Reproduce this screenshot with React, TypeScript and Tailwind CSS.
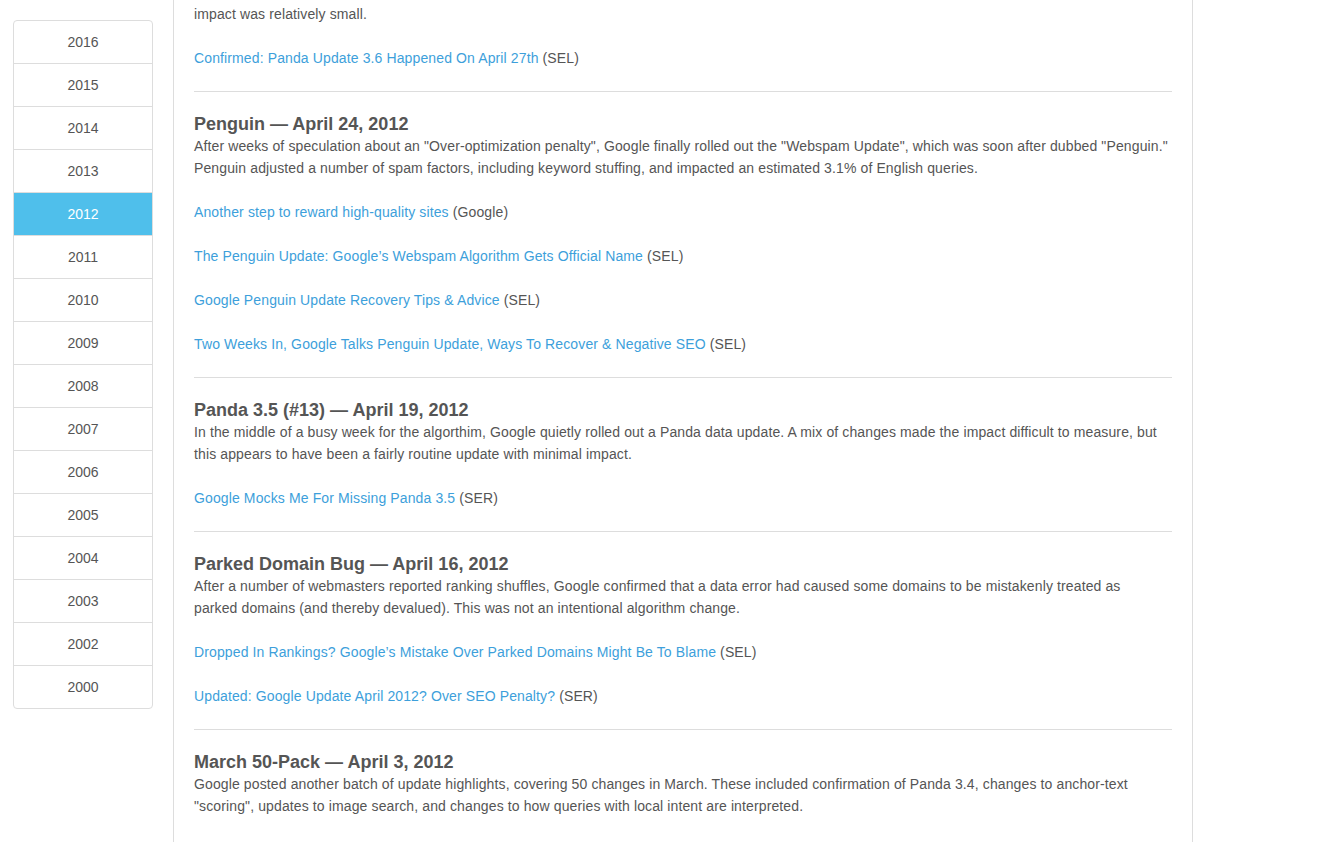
import React from "react";

const years = ["2016","2015","2014","2013","2012","2011","2010","2009","2008","2007","2006","2005","2004","2003","2002","2000"];

type Link = { t: string; s: string };
type Section = { title: string; lines: string[]; links: Link[] };

const sections: Section[] = [
  {
    title: "Penguin — April 24, 2012",
    lines: [
      "After weeks of speculation about an \"Over-optimization penalty\", Google finally rolled out the \"Webspam Update\", which was soon after dubbed \"Penguin.\"",
      "Penguin adjusted a number of spam factors, including keyword stuffing, and impacted an estimated 3.1% of English queries.",
    ],
    links: [
      { t: "Another step to reward high-quality sites", s: "(Google)" },
      { t: "The Penguin Update: Google’s Webspam Algorithm Gets Official Name", s: "(SEL)" },
      { t: "Google Penguin Update Recovery Tips & Advice", s: "(SEL)" },
      { t: "Two Weeks In, Google Talks Penguin Update, Ways To Recover & Negative SEO", s: "(SEL)" },
    ],
  },
  {
    title: "Panda 3.5 (#13) — April 19, 2012",
    lines: [
      "In the middle of a busy week for the algorthim, Google quietly rolled out a Panda data update. A mix of changes made the impact difficult to measure, but",
      "this appears to have been a fairly routine update with minimal impact.",
    ],
    links: [{ t: "Google Mocks Me For Missing Panda 3.5", s: "(SER)" }],
  },
  {
    title: "Parked Domain Bug — April 16, 2012",
    lines: [
      "After a number of webmasters reported ranking shuffles, Google confirmed that a data error had caused some domains to be mistakenly treated as",
      "parked domains (and thereby devalued). This was not an intentional algorithm change.",
    ],
    links: [
      { t: "Dropped In Rankings? Google’s Mistake Over Parked Domains Might Be To Blame", s: "(SEL)" },
      { t: "Updated: Google Update April 2012? Over SEO Penalty?", s: "(SER)" },
    ],
  },
  {
    title: "March 50-Pack — April 3, 2012",
    lines: [
      "Google posted another batch of update highlights, covering 50 changes in March. These included confirmation of Panda 3.4, changes to anchor-text",
      "\"scoring\", updates to image search, and changes to how queries with local intent are interpreted.",
    ],
    links: [],
  },
];

function LinkLine({ l }: { l: Link }) {
  return (
    <p className="leading-[22px] mt-[22px] tracking-[0.12px] whitespace-nowrap">
      <a className="text-[#3d9fdb]">{l.t}</a> {l.s}
    </p>
  );
}

export default function App() {
  return (
    <div
      className="flex min-h-[842px] bg-white text-[14px] text-[#555555]"
      style={{ fontFamily: '"Liberation Sans", Arial, sans-serif' }}
    >
      <div className="w-[173px] shrink-0 pl-[13px] pr-[20px] pt-[20px]">
        <div className="flex flex-col rounded-[4px] border border-[#dddddd] overflow-hidden">
          {years.map((y, i) => (
            <div
              key={y}
              className={`flex items-center justify-center ${i > 0 ? "h-[43px] border-t border-[#dddddd]" : "h-[42px]"} ${y === "2012" ? "bg-[#4fbfeb] text-white border-[#4fbfeb]" : "text-[#555555]"}`}
            >
              {y}
            </div>
          ))}
        </div>
      </div>
      <div className="w-[1020px] shrink-0 border-l border-r border-[#dddddd] px-[20px] pt-[3px] h-[842px] overflow-hidden">
        <p className="leading-[22px] tracking-[0.12px]">impact was relatively small.</p>
        <LinkLine l={{ t: "Confirmed: Panda Update 3.6 Happened On April 27th", s: "(SEL)" }} />
        {sections.map((s) => (
          <div key={s.title}>
            <div className="mt-[22px] border-t border-[#dddddd]" />
            <h4 className="mt-[22px] text-[18px] leading-[20px] font-bold text-[#555555]">{s.title}</h4>
            <div className="mt-[1px]">
              {s.lines.map((ln) => (
                <p key={ln} className="leading-[22px] tracking-[0.12px] whitespace-nowrap">{ln}</p>
              ))}
            </div>
            {s.links.map((l) => (
              <LinkLine key={l.t} l={l} />
            ))}
          </div>
        ))}
      </div>
      <div className="flex-1" />
    </div>
  );
}
